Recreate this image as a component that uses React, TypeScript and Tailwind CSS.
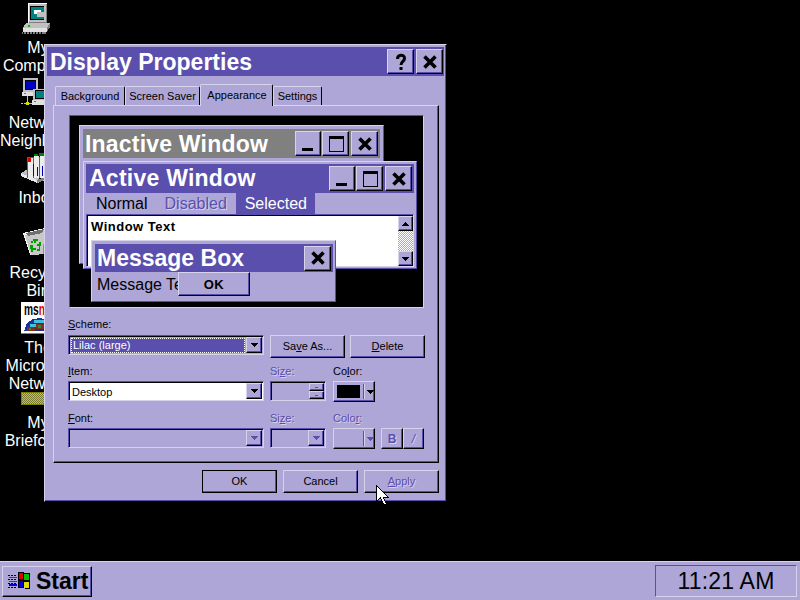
import React from 'react';

const raised = 'border border-t-[#d6d3eb] border-l-[#d6d3eb] border-r-black border-b-black shadow-[inset_-1px_-1px_0_#5a4eaa]';
const sunken = 'border border-t-[#5a4eaa] border-l-[#5a4eaa] border-r-[#d6d3eb] border-b-[#d6d3eb] shadow-[inset_1px_1px_0_#000000]';
const disabled = 'text-[#5a4fac] [text-shadow:1px_1px_0_#d6d3eb]';

function DesktopIcon({ icon, lines }: { icon: React.ReactNode; lines: string[] }) {
  return (
    <div className="relative h-[75px] w-[80px]">
      <div className="absolute left-[20px] top-0 h-[32px] w-[34px]">{icon}</div>
      <div className="absolute left-0 top-[37px] w-[76px] text-center text-[16px] leading-[18px] text-white">
        {lines.map((l) => (
          <div key={l} className="whitespace-nowrap">{l}</div>
        ))}
      </div>
    </div>
  );
}

function ComputerIcon() {
  return (
    <svg width="34" height="32" viewBox="0 0 34 32" shapeRendering="crispEdges">
      <path d="M8 1h19v20H8z" fill="#c0c0c0" />
      <path d="M8 1h19v1H9v19H8z" fill="#fff" />
      <path d="M26 2h1v19h-1zM9 20h18v1H9z" fill="#808080" />
      <path d="M10 4h14v14H10z" fill="#000" />
      <path d="M11 5h13v12H11z" fill="#008080" />
      <path d="M14 8h7v4h-7z" fill="#fff" />
      <path d="M17 10h7v5h-7z" fill="#c0c0c0" />
      <path d="M6 21h24l-3 5H3z" fill="#c0c0c0" />
      <path d="M3 26h24v4H3z" fill="#e0e0e0" />
      <path d="M27 26l3-5v4l-3 5z" fill="#808080" />
      <path d="M8 23h2v2H8z" fill="#00c000" />
      <path d="M2 30h24v2H2z" fill="#808080" />
      <path d="M3 30h1v2H3zM6 30h1v2H6zM9 30h1v2H9zM12 30h1v2h-1zM15 30h1v2h-1zM18 30h1v2h-1zM21 30h1v2h-1z" fill="#000" />
    </svg>
  );
}

function NetworkIcon() {
  return (
    <svg width="34" height="32" viewBox="0 0 34 32" shapeRendering="crispEdges">
      <path d="M3 1h15v14H3z" fill="#c0c0c0" />
      <path d="M5 3h11v10H5z" fill="#000" />
      <path d="M6 4h9v8H6z" fill="#0000c0" />
      <path d="M2 15h16v4H2z" fill="#e0e0e0" />
      <path d="M4 16h2v1H4z" fill="#00c000" />
      <path d="M13 12h15v11H13z" fill="#c0c0c0" />
      <path d="M15 13h11v9H15z" fill="#000" />
      <path d="M16 14h9v7h-9z" fill="#008080" />
      <path d="M12 23h16v5H12z" fill="#e0e0e0" />
      <path d="M14 24h2v1h-2z" fill="#00c000" />
      <path d="M1 26h2v1H1zM4 26h2v1H4zM9 26h3v1H9zM7 19h1v6H7z" fill="#c0c0c0" />
      <path d="M6 25h3v3H6z" fill="#e0e000" />
    </svg>
  );
}

function InboxIcon() {
  return (
    <svg width="34" height="32" viewBox="0 0 34 32" shapeRendering="crispEdges">
      <path d="M1 21l7-4v6l12 4 7-3v3l-9 4z" fill="#c0c0c0" />
      <path d="M1 21l16 7v3L1 24z" fill="#e8e8e8" />
      <path d="M17 28l10-4v3l-10 4z" fill="#808080" />
      <path d="M7 5h18v21H7z" fill="#606060" />
      <path d="M8 6h5v20H8zM14 4h5v22h-5zM20 4h5v22h-5z" fill="#ececec" />
      <path d="M8 6h3v4H8z" fill="#e00000" />
      <path d="M13 12h1v12h-1zM17 15h1v9h-1zM22 14h1v10h-1z" fill="#0000c0" />
      <path d="M14 2h4v2h-4zM19 1h6v3h-6z" fill="#008000" />
    </svg>
  );
}

function RecycleIcon() {
  return (
    <svg width="34" height="32" viewBox="0 0 34 32" shapeRendering="crispEdges">
      <path d="M3 6l22-5 3 2-2 24-15 1z" fill="#c8c8c8" />
      <path d="M3 6l22-5v2L5 8l6 20h-1z" fill="#f4f4f4" />
      <path d="M6 6l18-4-2 4-14 3z" fill="#707070" />
      <path d="M24 7h2l-1 20h-2z" fill="#909090" />
      <path d="M11 14h2v-2h5v2h-2v2h-2v-2h-1v2h-2z" fill="#00a000" />
      <path d="M10 18h3v3h3v2h-3v2h-2v-3h-1z" fill="#00a000" />
      <path d="M19 15h2v4h-1v5h-3v-2h2v-3h-2v-2h2z" fill="#00a000" />
    </svg>
  );
}

function MsnIcon() {
  return (
    <svg width="34" height="33" viewBox="0 0 34 33">
      <path d="M1 0h33v31H1z" fill="#fff" shapeRendering="crispEdges" />
      <text x="4" y="13" fontFamily="'Liberation Sans', sans-serif" fontWeight="bold" fontSize="16" fill="#000" textLength="21" lengthAdjust="spacingAndGlyphs">
        ms<tspan fill="#e00000">n</tspan>
      </text>
      <g shapeRendering="crispEdges">
        <path d="M4 29l3-8 6-4 8-1 7 4 3 9z" fill="#203090" />
        <path d="M14 18h10v3H14zM10 22h6v3h-6z" fill="#40c0e0" />
        <path d="M16 22h8v5h-8zM7 25h8v4H7z" fill="#803020" />
        <path d="M18 23h3v3h-3zM9 26h2v2H9z" fill="#209040" />
        <path d="M1 31h33v1H1z" fill="#808080" />
      </g>
    </svg>
  );
}

function WindowButton({ kind, className }: { kind: 'min' | 'max' | 'close' | 'help'; className: string }) {
  return (
    <div className={`flex items-center justify-center bg-[#ada6d6] ${raised} ${className}`}>
      <svg width="18" height="18" viewBox="0 0 18 18">
        {kind === 'min' && <path d="M3 13h11v3H3z" fill="#000" shapeRendering="crispEdges" />}
        {kind === 'max' && <path d="M2 1h15v16H2zM3 4v12h13V4z" fill="#000" fillRule="evenodd" shapeRendering="crispEdges" />}
        {kind === 'close' && <path d="M3.5 3.5L14.5 14.5M14.5 3.5L3.5 14.5" stroke="#000" strokeWidth="3.6" fill="none" />}
        {kind === 'help' && (
          <>
            <path d="M5.5 6 C5.5 1 12.5 1 12.5 5.5 C12.5 8.5 9 8.5 9 12" stroke="#000" strokeWidth="3" fill="none" />
            <path d="M7.5 14h3v3h-3z" fill="#000" />
          </>
        )}
      </svg>
    </div>
  );
}

function Tab({ label, active, className }: { label: string; active?: boolean; className: string }) {
  return (
    <div
      className={`flex items-center justify-center border-l border-t border-l-[#d6d3eb] border-t-[#d6d3eb] border-r border-r-black text-[11px] text-black rounded-t-[2px] ${active ? 'h-[22px] bg-[#ada6d6]' : 'h-[19px]'} ${className}`}
    >
      {label}
    </div>
  );
}

function Arrow({ color = '#000000' }: { color?: string }) {
  return (
    <svg width="7" height="4" viewBox="0 0 7 4" shapeRendering="crispEdges">
      <path d="M0 0h7v1H6v1H5v1H4v1H3V3H2V2H1V1H0z" fill={color} />
    </svg>
  );
}

function Combo({ bg, dim, children, className }: { bg?: string; dim?: boolean; children?: React.ReactNode; className: string }) {
  return (
    <div className={`flex items-stretch p-[1px] ${sunken} ${bg ?? ''} ${className}`}>
      <div className="min-w-0 flex-1 overflow-hidden">{children}</div>
      <div className={`flex w-[16px] items-center justify-center bg-[#ada6d6] ${raised}`}>
        <Arrow color={dim ? '#5a4fac' : '#000000'} />
      </div>
    </div>
  );
}

function ColorButton({ dim, swatch }: { dim?: boolean; swatch?: boolean }) {
  return (
    <div className={`flex h-[21px] w-[42px] items-center pl-[3px] ${raised}`}>
      <div className={`h-[13px] w-[24px] ${swatch ? 'bg-black' : ''}`} />
      <div className="ml-[3px] mr-[3px] h-[15px] w-[1px] bg-[#5a4eaa] shadow-[1px_0_0_#d6d3eb]" />
      <Arrow color={dim ? '#5a4fac' : '#000000'} />
    </div>
  );
}

function PushButton({ children, className }: { children: React.ReactNode; className: string }) {
  return <div className={`flex h-[23px] w-[75px] items-center justify-center text-[11px] ${raised} ${className}`}>{children}</div>;
}

function Preview() {
  return (
    <div className="relative ml-[15px] mt-[9px] h-[193px] w-[355px] overflow-hidden border border-t-[#5a4eaa] border-l-[#5a4eaa] border-r-[#d6d3eb] border-b-[#d6d3eb] bg-black">
      {/* Inactive window */}
      <div className="absolute left-[9px] top-[9px] h-[139px] w-[305px] border border-[#d6d3eb] border-r-[#5a4eaa] border-b-[#5a4eaa] bg-[#ada6d6] p-[3px]">
        <div className="flex h-[29px] items-center justify-between bg-[#808080] pl-[2px] pr-[2px]">
          <span className="mt-[2px] text-[23px] font-bold leading-none tracking-[0.2px] text-white">Inactive Window</span>
          <div className="flex items-center">
            <WindowButton kind="min" className="h-[25px] w-[26px]" />
            <WindowButton kind="max" className="ml-[1px] h-[25px] w-[27px]" />
            <WindowButton kind="close" className="ml-[2px] h-[25px] w-[27px]" />
          </div>
        </div>
      </div>
      {/* Active window */}
      <div className="absolute left-[13px] top-[45px] h-[108px] w-[334px] border border-[#d6d3eb] border-r-[#5a4eaa] border-b-[#5a4eaa] bg-[#ada6d6] p-[2px]">
        <div className="flex h-[29px] items-center justify-between bg-[#5a4fac] pl-[3px] pr-[2px]">
          <span className="text-[23px] font-bold leading-none tracking-[0.25px] text-white">Active Window</span>
          <div className="flex items-center">
            <WindowButton kind="min" className="h-[25px] w-[26px]" />
            <WindowButton kind="max" className="ml-[1px] h-[25px] w-[27px]" />
            <WindowButton kind="close" className="ml-[2px] h-[25px] w-[27px]" />
          </div>
        </div>
        <div className="flex h-[21px] items-center pl-[10px] text-[16px] leading-none">
          <span className="text-black">Normal</span>
          <span className={`ml-[17px] ${disabled}`}>Disabled</span>
          <span className="ml-[9px] flex h-[21px] w-[79px] items-center justify-center bg-[#5a4fac] pl-[1px] text-white">Selected</span>
        </div>
        <div className="flex h-[53px] border border-t-[#5a4eaa] border-l-[#5a4eaa] border-b-[#d6d3eb] border-r-[#d6d3eb] shadow-[inset_1px_1px_0_#000000]">
          <div className="ml-[1px] mt-[1px] flex-1 bg-white pl-[3px] pt-[3px] text-[13px] font-bold leading-[15px] tracking-[0.5px] text-black">
            Window Text
          </div>
          <div className="mt-[1px] flex w-[15px] flex-col bg-[repeating-conic-gradient(#ada6d6_0_25%,#ffffff_0_50%)] bg-[length:2px_2px]">
            <div className={`flex h-[15px] items-center justify-center bg-[#ada6d6] ${raised}`}>
              <div className="rotate-180 leading-none">
                <Arrow />
              </div>
            </div>
            <div className="flex-1" />
            <div className={`flex h-[15px] items-center justify-center bg-[#ada6d6] ${raised}`}>
              <Arrow />
            </div>
          </div>
        </div>
      </div>
      {/* Message box */}
      <div className="absolute left-[21px] top-[124px] h-[62px] w-[245px] border border-[#d6d3eb] border-r-[#5a4eaa] border-b-[#5a4eaa] bg-[#ada6d6] p-[3px] pr-[2px]">
        <div className="flex h-[28px] items-center justify-between bg-[#5a4fac] pl-[2px] pr-[2px]">
          <span className="text-[23px] font-bold leading-none text-white">Message Box</span>
          <WindowButton kind="close" className="h-[25px] w-[27px]" />
        </div>
        <div className="relative flex h-[24px] items-center pl-[2px] pt-[2px] text-[16px] leading-none text-black">
          <span>Message Text</span>
          <div className={`absolute left-[83px] top-0 flex h-[24px] w-[72px] items-center justify-center bg-[#ada6d6] text-[13px] font-bold tracking-[0.6px] ${raised}`}>
            OK
          </div>
        </div>
      </div>
    </div>
  );
}

function Label({ children, dim, className }: { children: React.ReactNode; dim?: boolean; className?: string }) {
  return <div className={`h-[14px] text-[11px] leading-[13px] ${dim ? disabled : 'text-black'} ${className ?? ''}`}>{children}</div>;
}

function Dialog() {
  return (
    <div className="absolute left-[44px] top-[44px] flex h-[458px] w-[403px] flex-col border border-t-[#d6d3eb] border-l-[#d6d3eb] border-r-black border-b-black bg-[#ada6d6] p-[2px] shadow-[inset_-1px_-1px_0_#5a4eaa]">
      <div className="flex h-[29px] w-[397px] shrink-0 items-center justify-between bg-[#5a4fac] pl-[3px] pr-[1px]">
        <span className="mt-[2px] text-[23px] font-bold leading-none text-white">Display Properties</span>
        <div className="flex">
          <WindowButton kind="help" className="h-[25px] w-[27px]" />
          <WindowButton kind="close" className="ml-[2px] h-[25px] w-[27px]" />
        </div>
      </div>

      <div className="ml-[8px] mt-[8px] flex h-[21px] shrink-0 items-end">
        <Tab label="Background" className="w-[70px]" />
        <Tab label="Screen Saver" className="w-[75px]" />
        <Tab label="Appearance" active className="relative z-10 -mb-[1px] w-[73px] pl-[1px]" />
        <Tab label="Settings" className="w-[49px]" />
      </div>

      <div className="ml-[6px] h-[358px] w-[386px] shrink-0 border border-t-[#d6d3eb] border-l-[#d6d3eb] border-r-black border-b-black shadow-[inset_-1px_-1px_0_#5a4eaa]">
        <Preview />

        <div className="ml-[14px] mt-[10px] flex flex-col">
          <Label className="mb-[3px]"><u>S</u>cheme:</Label>
          <div className="flex">
            <Combo className="h-[20px] w-[196px]">
              <div className="m-[1px] h-[15px] bg-[#5a4fac] pl-[2px] text-[11px] leading-[14px] text-white outline-1 outline-dotted outline-white -outline-offset-1">
                Lilac (large)
              </div>
            </Combo>
            <PushButton className="ml-[6px]">Sa<u>v</u>e As...</PushButton>
            <PushButton className="ml-[5px]"><u>D</u>elete</PushButton>
          </div>

          <div className="mt-[7px] flex h-[14px]">
            <Label className="w-[202px]"><u>I</u>tem:</Label>
            <Label dim className="w-[63px]">Si<u>z</u>e:</Label>
            <Label>Co<u>l</u>or:</Label>
          </div>
          <div className="mt-[2px] flex">
            <Combo bg="bg-white" className="h-[20px] w-[196px]">
              <div className="pl-[2px] text-[11px] leading-[18px] text-black">Desktop</div>
            </Combo>
            <div className={`ml-[6px] flex h-[20px] w-[56px] items-stretch justify-end p-[1px] pr-[1px] ${sunken}`}>
              <div className="flex w-[15px] flex-col">
                <div className={`flex h-[8px] flex-1 items-center justify-center ${raised}`}>
                  <div className="h-[1px] w-[3px] bg-[#5a4fac]" />
                </div>
                <div className={`flex h-[8px] flex-1 items-center justify-center ${raised}`}>
                  <div className="h-[1px] w-[3px] bg-[#5a4fac]" />
                </div>
              </div>
            </div>
            <div className="ml-[7px]">
              <ColorButton swatch />
            </div>
          </div>

          <div className="mt-[10px] flex h-[14px]">
            <Label className="w-[202px]"><u>F</u>ont:</Label>
            <Label dim className="w-[63px]">Si<u>z</u>e:</Label>
            <Label dim>Colo<u>r</u>:</Label>
          </div>
          <div className="mt-[2px] flex">
            <Combo dim className="h-[20px] w-[196px]" />
            <Combo dim className="ml-[6px] h-[20px] w-[56px]" />
            <div className="ml-[7px]">
              <ColorButton dim />
            </div>
            <div className={`ml-[6px] flex h-[21px] w-[22px] items-center justify-center text-[12px] font-bold ${raised} ${disabled}`}>B</div>
            <div className={`flex h-[21px] w-[21px] items-center justify-center text-[12px] italic ${raised} ${disabled}`}>/</div>
          </div>
        </div>
      </div>

      <div className="ml-[155px] mt-[7px] flex shrink-0 text-black">
        <PushButton className="outline outline-1 outline-black -outline-offset-1">OK</PushButton>
        <PushButton className="ml-[6px]">Cancel</PushButton>
        <PushButton className={`ml-[6px] ${disabled}`}><u>A</u>pply</PushButton>
      </div>
    </div>
  );
}

function StartLogo() {
  return (
    <svg width="26" height="20" viewBox="0 0 26 20" shapeRendering="crispEdges">
      <path d="M2 4h2v1H2zM5 4h2v1H5zM8 4h2v1H8zM2 8h2v1H2zM5 8h2v1H5zM8 8h2v1H8zM2 12h2v1H2zM5 12h2v1H5zM8 12h2v1H8zM2 16h2v1H2zM5 16h2v1H5zM8 16h2v1H8z" fill="#000" />
      <path d="M3 6h8v1H3zM3 10h8v1H3z" fill="#e00000" />
      <path d="M3 13h8v2H3z" fill="#0000e0" />
      <path d="M12 1h5l1 1h6v16h-5l-1-1h-6z" fill="#000" />
      <path d="M13 2h4v6h-4z" fill="#e00000" />
      <path d="M18 3h5v6h-5z" fill="#00c000" />
      <path d="M13 10h4v6h-4z" fill="#0000e0" />
      <path d="M18 11h5v6h-5z" fill="#e0e000" />
    </svg>
  );
}

export default function App() {
  return (
    <div className="relative h-[600px] w-[800px] overflow-hidden bg-black font-['Liberation_Sans',sans-serif]">
      <div className="flex h-[561px] w-[80px] flex-col pt-[2px]">
        <DesktopIcon icon={<ComputerIcon />} lines={['My', 'Computer']} />
        <DesktopIcon icon={<NetworkIcon />} lines={['Network', 'Neighborhood']} />
        <DesktopIcon icon={<InboxIcon />} lines={['Inbox']} />
        <DesktopIcon icon={<RecycleIcon />} lines={['Recycle', 'Bin']} />
        <DesktopIcon icon={<MsnIcon />} lines={['The', 'Microsoft', 'Network']} />
        <DesktopIcon
          icon={
            <div className="ml-[1px] mt-[15px] h-[13px] w-[33px] border border-[#808000] bg-[repeating-conic-gradient(#7a7a30_0_25%,#b8b8a0_0_50%)] bg-[length:2px_2px]" />
          }
          lines={['My', 'Briefcase']}
        />
      </div>

      <Dialog />

      <svg className="absolute left-[376px] top-[485px]" width="13" height="21" viewBox="0 0 13 21" shapeRendering="crispEdges">
        <path d="M0.5 0.5v16l4-4 3 7h3l-3-7h5z" fill="#fff" stroke="#000" />
      </svg>

      <div className="flex h-[39px] items-center justify-between border-t border-[#d6d3eb] bg-[#ada6d6] pl-[2px] pr-[3px]">
        <div className={`flex h-[31px] w-[90px] items-center pl-[3px] ${raised}`}>
          <StartLogo />
          <span className="ml-[4px] text-[23px] font-bold leading-none text-black">Start</span>
        </div>
        <div className="flex h-[32px] w-[142px] items-center justify-center border border-t-[#5a4eaa] border-l-[#5a4eaa] border-r-[#d6d3eb] border-b-[#d6d3eb] text-[23px] leading-none tracking-[0.2px] text-black">
          11:21 AM
        </div>
      </div>
    </div>
  );
}
